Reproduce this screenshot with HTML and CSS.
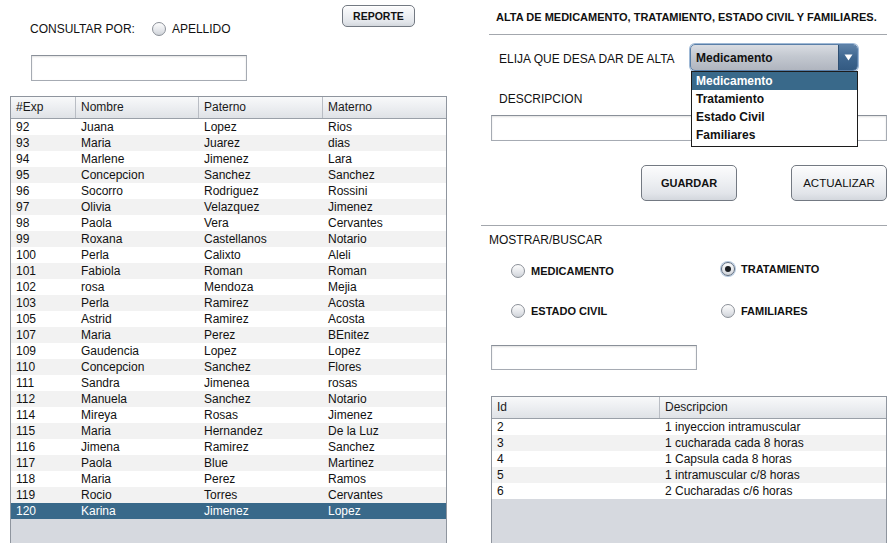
FILE: index.html
```html
<!DOCTYPE html>
<html lang="es">
<head>
<meta charset="utf-8">
<title>Alta de medicamento</title>
<link rel="stylesheet" href="styles.css">
</head>
<body>
<div class="app">
  <section class="left">
    <div class="left-top">
      <div class="query">
        <span class="lbl">CONSULTAR POR:</span>
        <label class="radio query-radio"><span class="radio-dot"></span><span class="radio-text">APELLIDO</span></label>
      </div>
      <button class="btn btn-report">REPORTE</button>
    </div>
    <div class="tf tf-search"></div>
    <div class="grid grid-patients">
      <div class="grid-head">
        <div class="hc">#Exp</div><div class="hc">Nombre</div><div class="hc">Paterno</div><div class="hc">Materno</div>
      </div>
      <div class="grid-body">
        <div class="row"><span>92</span><span>Juana</span><span>Lopez</span><span>Rios</span></div>
        <div class="row"><span>93</span><span>Maria</span><span>Juarez</span><span>dias</span></div>
        <div class="row"><span>94</span><span>Marlene</span><span>Jimenez</span><span>Lara</span></div>
        <div class="row"><span>95</span><span>Concepcion</span><span>Sanchez</span><span>Sanchez</span></div>
        <div class="row"><span>96</span><span>Socorro</span><span>Rodriguez</span><span>Rossini</span></div>
        <div class="row"><span>97</span><span>Olivia</span><span>Velazquez</span><span>Jimenez</span></div>
        <div class="row"><span>98</span><span>Paola</span><span>Vera</span><span>Cervantes</span></div>
        <div class="row"><span>99</span><span>Roxana</span><span>Castellanos</span><span>Notario</span></div>
        <div class="row"><span>100</span><span>Perla</span><span>Calixto</span><span>Aleli</span></div>
        <div class="row"><span>101</span><span>Fabiola</span><span>Roman</span><span>Roman</span></div>
        <div class="row"><span>102</span><span>rosa</span><span>Mendoza</span><span>Mejia</span></div>
        <div class="row"><span>103</span><span>Perla</span><span>Ramirez</span><span>Acosta</span></div>
        <div class="row"><span>105</span><span>Astrid</span><span>Ramirez</span><span>Acosta</span></div>
        <div class="row"><span>107</span><span>Maria</span><span>Perez</span><span>BEnitez</span></div>
        <div class="row"><span>109</span><span>Gaudencia</span><span>Lopez</span><span>Lopez</span></div>
        <div class="row"><span>110</span><span>Concepcion</span><span>Sanchez</span><span>Flores</span></div>
        <div class="row"><span>111</span><span>Sandra</span><span>Jimenea</span><span>rosas</span></div>
        <div class="row"><span>112</span><span>Manuela</span><span>Sanchez</span><span>Notario</span></div>
        <div class="row"><span>114</span><span>Mireya</span><span>Rosas</span><span>Jimenez</span></div>
        <div class="row"><span>115</span><span>Maria</span><span>Hernandez</span><span>De la Luz</span></div>
        <div class="row"><span>116</span><span>Jimena</span><span>Ramirez</span><span>Sanchez</span></div>
        <div class="row"><span>117</span><span>Paola</span><span>Blue</span><span>Martinez</span></div>
        <div class="row"><span>118</span><span>Maria</span><span>Perez</span><span>Ramos</span></div>
        <div class="row"><span>119</span><span>Rocio</span><span>Torres</span><span>Cervantes</span></div>
        <div class="row selected"><span>120</span><span>Karina</span><span>Jimenez</span><span>Lopez</span></div>
      </div>
    </div>
  </section>

  <section class="right">
    <h1 class="right-title">ALTA DE MEDICAMENTO, TRATAMIENTO, ESTADO CIVIL Y FAMILIARES.</h1>
    <div class="sep sep-top"></div>
    <div class="alta-row">
      <span class="lbl lbl-indent">ELIJA QUE DESA DAR DE ALTA</span>
      <div class="combo">
        <span class="combo-value">Medicamento</span>
        <span class="combo-arrow"><svg width="9" height="7" viewBox="0 0 9 7"><path d="M0.5 0.5 L8.5 0.5 L4.5 6.5 Z" fill="#fff"/></svg></span>
        <ul class="combo-list">
          <li class="active">Medicamento</li>
          <li>Tratamiento</li>
          <li>Estado Civil</li>
          <li>Familiares</li>
        </ul>
      </div>
    </div>
    <div class="lbl lbl-indent desc-label">DESCRIPCION</div>
    <div class="tf tf-desc"></div>
    <div class="actions">
      <button class="btn btn-big btn-bold">GUARDAR</button>
      <button class="btn btn-big">ACTUALIZAR</button>
    </div>
    <div class="sep sep-mid"></div>
    <div class="lbl mostrar">MOSTRAR/BUSCAR</div>
    <div class="radios">
      <label class="radio bold"><span class="radio-dot"></span><span class="radio-text">MEDICAMENTO</span></label>
      <label class="radio bold raised"><span class="radio-dot checked"></span><span class="radio-text">TRATAMIENTO</span></label>
      <label class="radio bold"><span class="radio-dot"></span><span class="radio-text">ESTADO CIVIL</span></label>
      <label class="radio bold"><span class="radio-dot"></span><span class="radio-text">FAMILIARES</span></label>
    </div>
    <div class="tf tf-search2"></div>
    <div class="grid grid-desc">
      <div class="grid-head">
        <div class="hc">Id</div><div class="hc">Descripcion</div>
      </div>
      <div class="grid-body">
        <div class="row"><span>2</span><span>1 inyeccion intramuscular</span></div>
        <div class="row"><span>3</span><span>1 cucharada cada 8 horas</span></div>
        <div class="row"><span>4</span><span>1 Capsula cada 8 horas</span></div>
        <div class="row"><span>5</span><span>1 intramuscular c/8 horas</span></div>
        <div class="row"><span>6</span><span>2 Cucharadas c/6 horas</span></div>
      </div>
    </div>
  </section>
</div>
</body>
</html>
```

FILE: styles.css
```css
html, body {
  margin: 0;
  padding: 0;
  overflow: hidden;
  background: #ffffff;
}
body {
  width: 887px;
  height: 543px;
  font-family: "Liberation Sans", Arial, sans-serif;
  font-size: 12px;
  color: #111;
}
.app {
  display: flex;
  align-items: flex-start;
}

/* generic */
.lbl {
  font-size: 12px;
  line-height: 14px;
  white-space: nowrap;
}
.tf {
  box-sizing: border-box;
  background: #fff;
  border: 1px solid #a6abb3;
  border-top-color: #8a9099;
  box-shadow: inset 0 1px 2px rgba(0,0,0,0.12);
}
.btn {
  box-sizing: border-box;
  margin: 0;
  padding: 0;
  font-family: "Liberation Sans", Arial, sans-serif;
  color: #111;
  border: 1px solid #737982;
  border-radius: 5px;
  background: linear-gradient(#fcfcfd 0%, #eef0f3 45%, #e2e5ea 80%, #d3d7dd 100%);
  box-shadow: inset 0 1px 0 #fff;
  cursor: default;
}
.btn-report {
  width: 73px;
  height: 22px;
  margin-top: 5px;
  margin-right: 32px;
  font-weight: bold;
  font-size: 10.5px;
}
.btn-big {
  width: 96px;
  height: 36px;
  font-size: 11.5px;
}
.btn-bold {
  font-weight: bold;
  font-size: 11px;
}
.sep {
  height: 1px;
  background: #a3a7ad;
}

/* radios */
.radio {
  display: flex;
  align-items: center;
  height: 14px;
  white-space: nowrap;
}
.radio-dot {
  box-sizing: border-box;
  width: 14px;
  height: 14px;
  border-radius: 50%;
  border: 1px solid #8b9098;
  background: linear-gradient(#fdfdfd, #e4e6ea 60%, #cfd3d9);
  display: flex;
  align-items: center;
  justify-content: center;
  flex: none;
}
.radio-dot.checked {
  border-color: #5d6b7d;
  box-shadow: 0 0 0 1px #b3c6dd;
}
.radio-dot.checked::after {
  content: "";
  width: 6px;
  height: 6px;
  border-radius: 50%;
  background: #1b1e22;
}
.radio-text {
  margin-left: 6px;
  font-size: 12px;
  line-height: 14px;
}
.radio.bold .radio-text {
  font-weight: bold;
  font-size: 11px;
}

/* left */
.left {
  width: 437px;
  margin-left: 10px;
  flex: none;
}
.left-top {
  display: flex;
  justify-content: space-between;
  align-items: flex-start;
  height: 55px;
}
.query {
  display: flex;
  align-items: center;
  margin-top: 22px;
  margin-left: 20px;
  height: 14px;
}
.query-radio {
  margin-left: 17px;
}
.tf-search {
  margin-left: 21px;
  width: 216px;
  height: 26px;
}

/* grids */
.grid {
  box-sizing: border-box;
  border: 1px solid #8f959e;
  border-bottom: none;
  background: #d6d9df;
  overflow: hidden;
}
.grid-patients {
  margin-top: 15px;
  height: 460px;
}
.grid-head, .row {
  display: grid;
}
.grid-patients .grid-head, .grid-patients .row {
  grid-template-columns: 65px 123px 124px 123px;
}
.grid-desc .grid-head, .grid-desc .row {
  grid-template-columns: 168px 226px;
}
.grid-head {
  height: 21px;
  border-bottom: 1px solid #9aa0a8;
  background: linear-gradient(#f8f9fa 0%, #eceef1 50%, #dfe2e6 100%);
}
.hc {
  box-sizing: border-box;
  padding-left: 5px;
  line-height: 21px;
  font-size: 12px;
  color: #1a1a1a;
  border-right: 1px solid #b9bdc4;
  white-space: nowrap;
}
.hc:last-child {
  border-right: none;
}
.row {
  height: 16px;
  background: #fff;
}
.row:nth-child(even) {
  background: #f2f2f2;
}
.row span {
  padding-left: 5px;
  line-height: 16px;
  font-size: 12px;
  color: #111;
  white-space: nowrap;
  overflow: hidden;
}
.row.selected {
  background: #39698a;
}
.row.selected span {
  color: #fff;
}

/* right */
.right {
  width: 406px;
  margin-left: 34px;
  flex: none;
}
.right-title {
  margin: 11px 0 0 15px;
  font-size: 11px;
  line-height: 13px;
  font-weight: bold;
  color: #111;
  white-space: nowrap;
}
.sep-top {
  margin-top: 10px;
  margin-left: 8px;
}
.alta-row {
  display: grid;
  grid-template-columns: 209px 168px;
  align-items: center;
  margin-top: 9px;
  height: 27px;
}
.lbl-indent {
  padding-left: 18px;
}
.alta-row .lbl {
  padding-top: 2px;
}
.combo {
  position: relative;
  box-sizing: border-box;
  height: 27px;
  border: 1px solid #5a7fa8;
  border-radius: 5px;
  box-shadow: 0 0 0 1px #9fb9d6;
  background: linear-gradient(#d9dce2 0%, #c3c8d0 45%, #b0b5bf 100%);
  display: flex;
  align-items: stretch;
}
.combo-value {
  flex: 1;
  padding-left: 5px;
  padding-top: 1px;
  font-weight: bold;
  font-size: 12px;
  line-height: 25px;
  color: #111;
}
.combo-arrow {
  width: 18px;
  border-left: 1px solid #2f4f72;
  border-radius: 0 4px 4px 0;
  background: linear-gradient(#5e82a8 0%, #3f6790 50%, #335a82 100%);
  display: flex;
  align-items: center;
  justify-content: center;
}
.combo-list {
  position: absolute;
  top: 26px;
  left: 0;
  box-sizing: border-box;
  width: 167px;
  height: 76px;
  margin: 0;
  padding: 0;
  list-style: none;
  background: #fff;
  border: 1px solid #1c1c1c;
  z-index: 5;
}
.combo-list li {
  height: 18px;
  line-height: 18px;
  padding-left: 4px;
  font-weight: bold;
  font-size: 12px;
  color: #111;
}
.combo-list li.active {
  background: #39698a;
  color: #fff;
}
.desc-label {
  margin-top: 21px;
}
.tf-desc {
  margin-top: 9px;
  margin-left: 10px;
  width: 396px;
  height: 26px;
}
.actions {
  display: flex;
  justify-content: flex-end;
  gap: 54px;
  margin-top: 24px;
  height: 36px;
}
.sep-mid {
  margin-top: 24px;
}
.mostrar {
  margin-top: 7px;
  margin-left: 8px;
}
.radios {
  display: grid;
  grid-template-columns: 210px auto;
  row-gap: 26px;
  margin-top: 17px;
  margin-left: 30px;
  align-items: start;
}
.radios .raised {
  margin-top: -2px;
}
.tf-search2 {
  margin-top: 27px;
  margin-left: 10px;
  width: 206px;
  height: 25px;
}
.grid-desc {
  margin-top: 26px;
  margin-left: 10px;
  width: 396px;
  height: 160px;
}
```
